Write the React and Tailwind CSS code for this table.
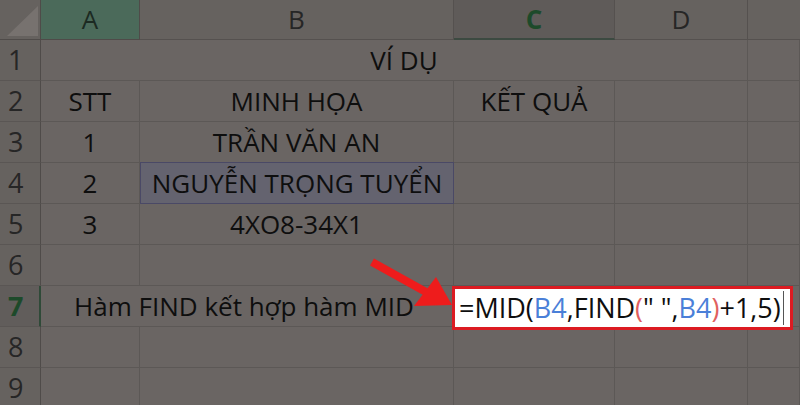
import React from "react";

const font = { fontFamily: '"Open Sans", "Noto Sans", sans-serif' };

function Cell({ className = "", children }) {
  return (
    <div className={"flex items-center border-r border-b border-[#5c5856] text-[26px] text-[#0e0e0e] whitespace-nowrap " + className}>
      {children}
    </div>
  );
}

function RowHead({ n, active }) {
  return (
    <div
      className={
        "flex items-center pl-[8px] border-b text-[27px] " +
        (active
          ? "bg-[#615d5b] border-[#5a5654] border-r-2 border-r-[#2f4a38] text-[#1d4a2a] font-bold"
          : "bg-[#66625f] border-[#5a5654] border-r border-r-[#4f4b49] text-[#262626]")
      }
    >
      {n}
    </div>
  );
}

export default function App() {
  return (
    <div className="relative w-[800px] h-[405px] overflow-hidden bg-[#6a6563]" style={font}>
      <div className="grid grid-cols-[41px_99px_314px_161px_133px_52px] grid-rows-[40px_repeat(9,41px)]">
        {/* header row */}
        <div className="relative bg-[#66625f] border-r border-b border-[#4f4b49]">
          <svg className="absolute left-0 top-0" width="41" height="40">
            <polygon points="7,36 38,36 38,6" fill="#77726f" />
          </svg>
        </div>
        <div className="flex items-center justify-center bg-[#4b6a5a] border-r border-b border-[#4f4b49] text-[26px] text-[#1c2a22]">A</div>
        <div className="flex items-center justify-center bg-[#66625f] border-r border-b border-[#55514f] text-[26px] text-[#262626]">B</div>
        <div className="flex items-center justify-center bg-[#5f5b59] border-r border-[#55514f] border-b-2 border-b-[#3c4a41] text-[26px] font-bold text-[#1d4a2a]">C</div>
        <div className="flex items-center justify-center bg-[#66625f] border-r border-b border-[#55514f] text-[26px] text-[#262626]">D</div>
        <div className="bg-[#66625f] border-b border-[#55514f]"></div>

        {/* row 1 */}
        <RowHead n={1} />
        <Cell className="col-span-4 justify-center pl-[20px]">VÍ DỤ</Cell>
        <Cell></Cell>

        {/* row 2 */}
        <RowHead n={2} />
        <Cell className="justify-center">STT</Cell>
        <Cell className="justify-center">MINH HỌA</Cell>
        <Cell className="justify-center">KẾT QUẢ</Cell>
        <Cell></Cell>
        <Cell></Cell>

        {/* row 3 */}
        <RowHead n={3} />
        <Cell className="justify-center">1</Cell>
        <Cell className="justify-center">TRẦN VĂN AN</Cell>
        <Cell></Cell>
        <Cell></Cell>
        <Cell></Cell>

        {/* row 4 */}
        <RowHead n={4} />
        <Cell className="justify-center">2</Cell>
        <div className="flex items-center justify-center bg-[#64636f] border border-[#4a4966] text-[26px] text-[#0e0e0e] whitespace-nowrap -mt-px">NGUYỄN TRỌNG TUYỂN</div>
        <Cell></Cell>
        <Cell></Cell>
        <Cell></Cell>

        {/* row 5 */}
        <RowHead n={5} />
        <Cell className="justify-center">3</Cell>
        <Cell className="justify-center">4XO8-34X1</Cell>
        <Cell></Cell>
        <Cell></Cell>
        <Cell></Cell>

        {/* row 6 */}
        <RowHead n={6} />
        <Cell></Cell>
        <Cell></Cell>
        <Cell></Cell>
        <Cell></Cell>
        <Cell></Cell>

        {/* row 7 */}
        <RowHead n={7} active />
        <Cell className="col-span-2 justify-center pr-[6px]">Hàm FIND kết hợp hàm MID</Cell>
        <Cell></Cell>
        <Cell></Cell>
        <Cell></Cell>

        {/* row 8 */}
        <RowHead n={8} />
        <Cell></Cell>
        <Cell></Cell>
        <Cell></Cell>
        <Cell></Cell>
        <Cell></Cell>

        {/* row 9 */}
        <RowHead n={9} />
        <Cell></Cell>
        <Cell></Cell>
        <Cell></Cell>
        <Cell></Cell>
        <Cell></Cell>
      </div>

      {/* arrow */}
      <svg className="absolute left-0 top-0 pointer-events-none" width="800" height="405">
        <line x1="372" y1="262" x2="426" y2="292" stroke="#ee1c1c" strokeWidth="8" strokeLinecap="butt" />
        <polygon points="452,305 414,306 436,277" fill="#ee1c1c" />
      </svg>

      {/* formula edit box */}
      <div className="absolute left-[452px] top-[286px] w-[341px] h-[44px] border-[3px] border-[#dc1b22] bg-white flex items-center pl-[4px] text-[27px] text-[#0e0e0e] whitespace-nowrap">
        <span>=MID(</span>
        <span className="text-[#4a7fd8]">B4</span>
        <span>,FIND</span>
        <span className="text-[#e0605e]">(</span>
        <span>" ",</span>
        <span className="text-[#4a7fd8]">B4</span>
        <span className="text-[#e0605e]">)</span>
        <span>+1,5)</span>
        <span className="ml-[2px] w-px h-[34px] bg-[#555]"></span>
      </div>
    </div>
  );
}
